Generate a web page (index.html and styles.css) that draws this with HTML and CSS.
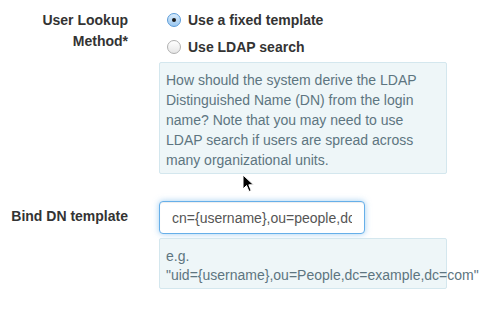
FILE: index.html
```html
<!DOCTYPE html>
<html>
<head>
<meta charset="utf-8">
<link rel="stylesheet" href="styles.css">
</head>
<body>
<div class="form">
  <div class="label label-top">User Lookup<br>Method*</div>
  <div class="control">
    <div class="option"><span class="radio checked"></span><span class="opt-text">Use a fixed template</span></div>
    <div class="option"><span class="radio"></span><span class="opt-text">Use LDAP search</span></div>
    <div class="help">How should the system derive the LDAP Distinguished Name (DN) from the login name? Note that you may need to use LDAP search if users are spread across many organizational units.</div>
  </div>
  <div class="label label-input">Bind DN template</div>
  <div class="control control-2">
    <input class="text-input" type="text" value="cn={username},ou=people,dc=example,dc=com">
    <div class="help hint">e.g. <span class="nowrap">"uid={username},ou=People,dc=example,dc=com"</span></div>
  </div>
</div>
<svg class="cursor" width="14" height="20" viewBox="0 0 14 20"><path d="M1 1 L1 15 L4.5 11.5 L7 17.5 L9.2 16.6 L6.8 10.8 L11.5 10.8 Z" fill="#000" stroke="#fff" stroke-width="1"/></svg>
</body>
</html>
```
FILE: styles.css
```css
html, body {
  margin: 0;
  padding: 0;
  background: #fff;
}
body {
  width: 500px;
  height: 309px;
  overflow: hidden;
  position: relative;
  font-family: "Liberation Sans", Arial, sans-serif;
  font-size: 14px;
  line-height: 20px;
  color: #333;
}
.form {
  display: grid;
  grid-template-columns: 128px 288px;
  column-gap: 31px;
  padding-top: 10px;
}
.label {
  font-weight: bold;
  text-align: right;
  color: #333;
}
.label-top {
  line-height: 21px;
}
.label-input {
  padding-top: 32px;
}
.option {
  display: flex;
  align-items: center;
  height: 20px;
  margin-bottom: 7px;
  margin-left: 8px;
}
.option + .option {
  margin-bottom: 5px;
}
.radio {
  box-sizing: border-box;
  width: 14px;
  height: 14px;
  border-radius: 50%;
  border: 1px solid #b0b0b0;
  background: linear-gradient(#ffffff, #e6e6e6);
  margin-right: 7px;
  position: relative;
  flex: none;
}
.radio.checked {
  border-color: #5a9bd8;
  background: linear-gradient(#d8ebfb, #9cc8f0);
}
.radio.checked::after {
  content: "";
  position: absolute;
  left: 4px;
  top: 4px;
  width: 4px;
  height: 4px;
  border-radius: 50%;
  background: #1a1a1a;
}
.opt-text {
  font-weight: bold;
  color: #333;
}
.help {
  background: #eef6f8;
  border: 1px solid #d4e7ee;
  border-radius: 2px;
  color: #5d7580;
  padding: 7px 6px 3px 6px;
}
.control-2 {
  padding-top: 27px;
}
.text-input {
  display: block;
  box-sizing: border-box;
  width: 206px;
  height: 33px;
  margin: 0;
  padding: 0 12px;
  font-family: "Liberation Sans", Arial, sans-serif;
  font-size: 14px;
  color: #555;
  border: 1px solid #66afe9;
  border-radius: 4px;
  box-shadow: inset 0 1px 1px rgba(0,0,0,.075), 0 0 6px rgba(102,175,233,.6);
  outline: none;
  background: #fff;
}
.hint {
  margin-top: 4px;
  padding: 8px 6px 3px 6px;
  line-height: 19px;
}
.nowrap {
  white-space: nowrap;
}
.cursor {
  position: absolute;
  left: 242px;
  top: 174px;
}
```
